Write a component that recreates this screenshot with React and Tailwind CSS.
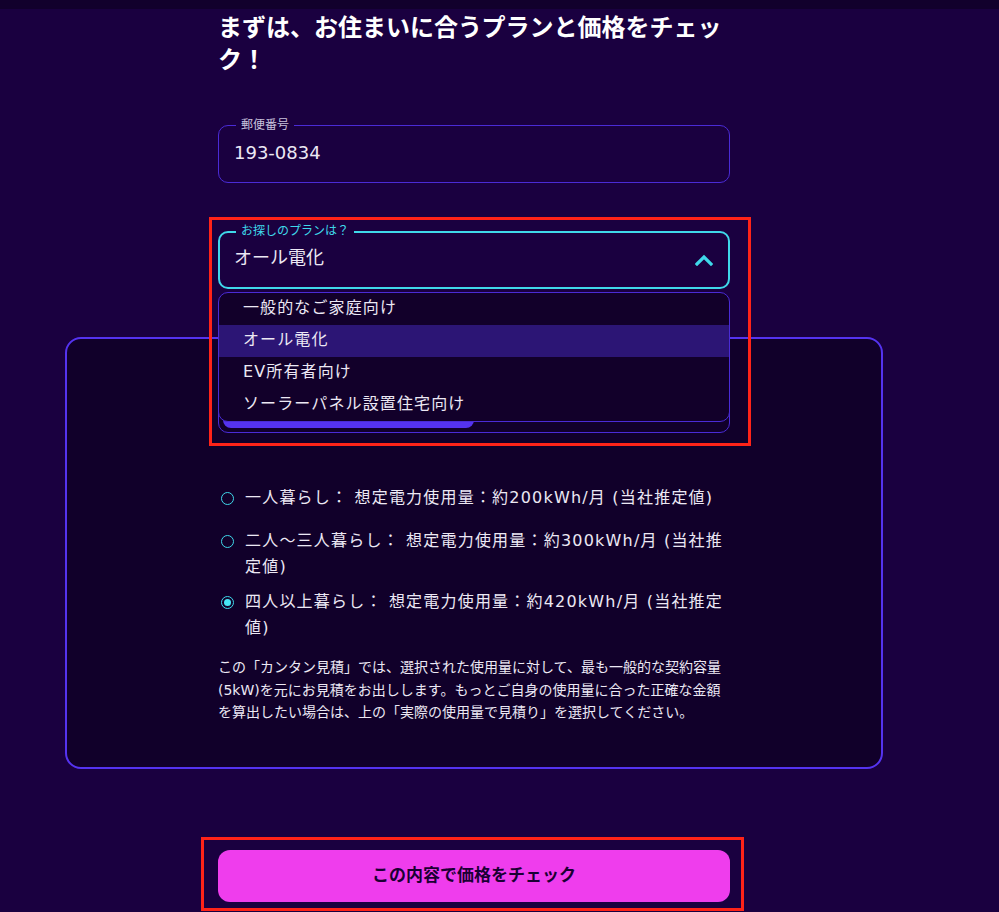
import React, { useState } from "react";

const plans = ["一般的なご家庭向け", "オール電化", "EV所有者向け", "ソーラーパネル設置住宅向け"];

const usages = [
  { label: "一人暮らし：", text: "想定電力使用量：約200kWh/月 (当社推定値)", mb: "mb-[17px]" },
  { label: "二人〜三人暮らし：", text: "想定電力使用量：約300kWh/月 (当社推定値)", mb: "mb-[9px]" },
  { label: "四人以上暮らし：", text: "想定電力使用量：約420kWh/月 (当社推定値)", mb: "mb-0" },
];

function Radio({ checked }) {
  return (
    <span className="mt-[7px] flex h-[13px] w-[13px] shrink-0 items-center justify-center rounded-full border-[1.5px] border-[#3fd8ea]">
      {checked && <span className="h-[7px] w-[7px] rounded-full bg-[#47e6f5]" />}
    </span>
  );
}

export default function App() {
  const [plan] = useState("オール電化");
  const [usage] = useState(2);

  return (
    <div
      className="relative min-h-[912px] bg-[#1a0040] text-[#ece8f4]"
      style={{ fontFamily: '"DejaVu Sans", "Noto Sans CJK JP", sans-serif' }}
    >
      <div className="h-[9px] bg-[#12002c]" />

      <div className="ml-[65px] w-[818px]">
        <div className="mx-auto w-[512px]">
          <h1 className="pt-[3px] text-[24px] font-bold leading-[32px] text-white">
            まずは、お住まいに合うプランと価格をチェック！
          </h1>

          {/* 郵便番号 */}
          <div className="relative mt-[49px] flex h-[58px] items-center rounded-[10px] border border-[#4a2bd6] px-[15px] pb-[3px]">
            <span className="absolute left-[17px] top-[-9px] bg-[#1a0040] px-[5px] text-[12px] leading-[16px] text-[#c9c2dc]">
              郵便番号
            </span>
            <span className="text-[18px] leading-[26px]">193-0834</span>
          </div>

          {/* プラン選択 */}
          <div className="relative mt-[48px]">
            <div className="relative flex h-[58px] items-center justify-between rounded-[10px] border-2 border-[#3fd8ea] pb-[4px] pl-[14px] pr-[15px]">
              <span className="absolute left-[16px] top-[-10px] bg-[#1a0040] px-[5px] text-[12px] leading-[16px] text-[#3fd8ea]">
                お探しのプランは？
              </span>
              <span className="text-[18px] leading-[26px]">{plan}</span>
              <svg width="18" height="12" viewBox="0 0 18 12" fill="none" className="mt-[3px]">
                <polyline points="2,10 9,3 16,10" stroke="#3fd8ea" strokeWidth="3.2" strokeLinecap="square" />
              </svg>
            </div>
            <ul className="absolute left-0 right-0 top-[61px] z-10 overflow-hidden rounded-[10px] border border-[#4a2bd6] bg-[#12002a]">
              {plans.map((p) => (
                <li
                  key={p}
                  className={
                    "flex h-[32px] items-center pb-[3px] pl-[24px] text-[16px] tracking-[0.07em] " +
                    (p === plan ? "bg-[#2c1575]" : "")
                  }
                >
                  {p}
                </li>
              ))}
            </ul>
          </div>
        </div>

        {/* 見積カード */}
        <div className="mt-[48px] rounded-[16px] border-2 border-[#5533f0] bg-[#11002a] pb-[43px] pt-[46px]">
          <div className="mx-auto w-[512px]">
            <div className="flex h-[48px] rounded-[10px] border border-[#4a2bd6] p-[4px]">
              <div className="flex flex-1 items-center justify-center rounded-[8px] bg-[#5533f0] text-[15px] font-bold">
                カンタン見積
              </div>
              <div className="flex flex-1 items-center justify-center text-[15px]">実際の使用量で見積り</div>
            </div>

            <div className="mt-[52px]">
              {usages.map((u, i) => (
                <div key={i} className={"flex gap-[11px] pl-[3px] " + u.mb}>
                  <Radio checked={usage === i} />
                  <p className="text-[16px] leading-[26px] tracking-[0.075em]">
                    {u.label} {u.text}
                  </p>
                </div>
              ))}
            </div>

            <p className="mt-[15px] text-[14px] leading-[22.5px]">
              この「カンタン見積」では、選択された使用量に対して、最も一般的な契約容量(5kW)を元にお見積をお出しします。もっとご自身の使用量に合った正確な金額を算出したい場合は、上の「実際の使用量で見積り」を選択してください。
            </p>
          </div>
        </div>

        <div className="mx-auto mt-[81px] w-[512px]">
          <button className="flex h-[52px] w-full items-center justify-center rounded-[12px] bg-[#ef3ded] text-[17px] font-bold text-[#1a0033]">
            この内容で価格をチェック
          </button>
        </div>
      </div>

      {/* 注釈の赤枠 */}
      <div className="pointer-events-none absolute left-[209px] top-[217px] h-[229px] w-[542px] border-[3px] border-[#ff2318]" />
      <div className="pointer-events-none absolute left-[201px] top-[837px] h-[74px] w-[543px] border-[3px] border-[#ff2318]" />
    </div>
  );
}
